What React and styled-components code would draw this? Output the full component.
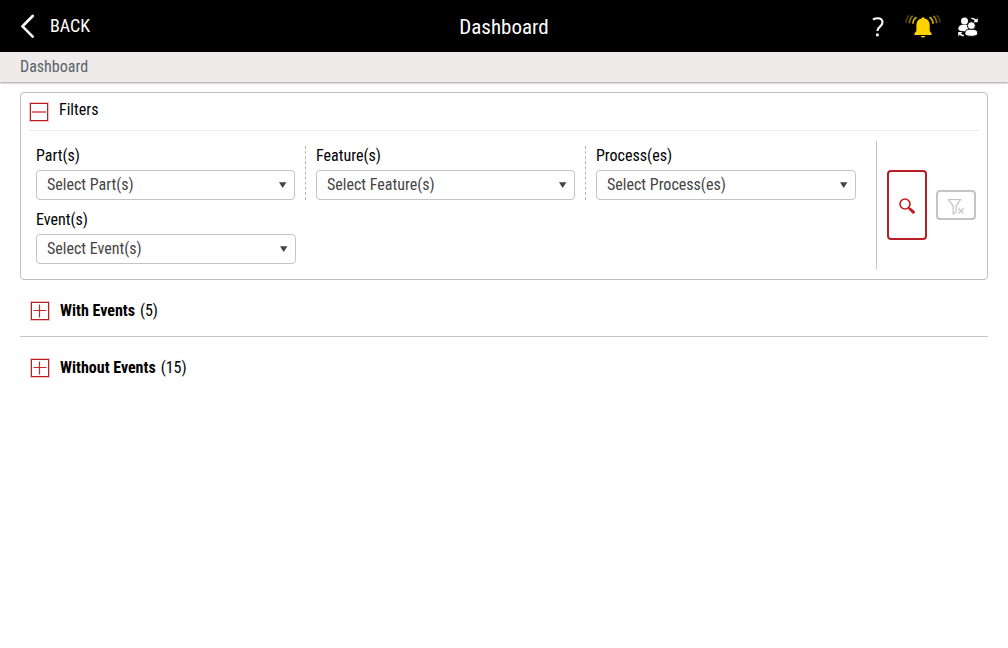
import React, { useState } from "react";
import styled, { createGlobalStyle } from "styled-components";

const filters = [
  { id: "parts", label: "Part(s)", placeholder: "Select Part(s)" },
  { id: "features", label: "Feature(s)", placeholder: "Select Feature(s)" },
  { id: "processes", label: "Process(es)", placeholder: "Select Process(es)" },
  { id: "events", label: "Event(s)", placeholder: "Select Event(s)" },
];

const groups = [
  { id: "with", title: "With Events", count: 5 },
  { id: "without", title: "Without Events", count: 15 },
];

function BackIcon() {
  return (
    <svg width="14" height="24" viewBox="0 0 14 24" fill="none" stroke="#fff" strokeWidth="2.600" strokeLinecap="round" aria-hidden="true">
      <path d="M12.700 2L2.500 12.300l10.200 10.300" />
    </svg>
  );
}

function HelpIcon() {
  return (
    <svg width="20" height="20" viewBox="-4 0 20 20" fill="none" stroke="#fff" strokeWidth="2.100" aria-hidden="true">
      <path d="M1 2.500C2.800 1.400 4.200 1.200 5.800 1.200c2.900 0 4.700 1.500 4.700 4 0 2-1 3.200-2.500 4.400C6.300 10.900 5.400 11.800 5.400 14" />
      <rect x="4.100" y="16.500" width="2.600" height="2.800" fill="#fff" stroke="none" />
    </svg>
  );
}

function BellIcon() {
  return (
    <svg width="36" height="24" viewBox="0 0 36 24" fill="none" strokeWidth="1.700" aria-hidden="true">
      <path fill="#ffd200" d="M16.500 3.500a1.600 1.600 0 0 1 3.100 0c3.300.7 5.100 3.200 5.100 6.500v6l1.800 2.200V20h-17v-1.800L11.400 16v-6c0-3.300 1.800-5.800 5.100-6.500z" />
      <path fill="#ffd200" d="M15.800 21h4.500a2.300 2 0 0 1-4.500 0z" />
      <path stroke="#dcb400" d="M11.500 2.200C9.200 3.500 8 5.500 7.900 8.800M24.500 2.200c2.300 1.300 3.500 3.300 3.600 6.600" />
      <path stroke="#8d7400" d="M7.800.8C5.500 2.600 4.400 5 4.400 8.300M28.200.8c2.300 1.800 3.400 4.200 3.400 7.500" />
      <path stroke="#4a3d00" d="M4.300.3C2 2.200 1 4.700 1 7.800M31.700.3C34 2.200 35 4.700 35 7.800" />
    </svg>
  );
}

function UsersIcon() {
  return (
    <svg width="20" height="20" viewBox="0 0 20 20" fill="#fff" aria-hidden="true">
      <circle cx="6.500" cy="3.900" r="3.500" />
      <path d="M.3 11.700C.3 9 2.500 7.700 4.800 7.700h3.400c1.500 0 3 .8 3.400 2v4.500H5.500C2.300 14.200.3 13.400.3 11.700z" />
      <g stroke="#000" strokeWidth="1">
        <circle cx="13.400" cy="8.700" r="4" />
        <path d="M6.800 16.200c0-2.700 2-3.900 4.500-3.900h3.900c2.500 0 4.500 1.200 4.500 3.900 0 2.100-2.600 3.100-6.400 3.100s-6.500-1-6.500-3.100z" />
      </g>
      <path d="M19.700 1v4.300h-4.500l1.500-1.400c-.8-1.100-1.900-1.700-3.400-1.800V.700c2 0 3.500.5 4.900 1.700z" />
      <path d="M.2 19.200v-4.300h4.300l-1.400 1.300c.6 1 1.500 1.500 2.800 1.600v1.500c-1.700 0-3-.4-4.200-1.500z" />
    </svg>
  );
}

function ToggleIcon({ open }) {
  return (
    <svg width="20" height="20" viewBox="0 0 20 20" fill="none" aria-hidden="true">
      <rect x="0.500" y="0.500" width="19" height="19" stroke="#f3bfc1" />
      <rect x="1.500" y="1.500" width="17" height="17" stroke="#b81f24" />
      {open ? (
        <path d="M3 10h14" stroke="#db7377" strokeWidth="2" />
      ) : (
        <path d="M3.500 9.500h13M9.500 3.500v13" stroke="#c02a2f" strokeWidth="1.200" />
      )}
    </svg>
  );
}

function SearchIcon() {
  return (
    <svg width="16" height="18" viewBox="0 0 16 18" fill="none" stroke="#c01c22" aria-hidden="true">
      <circle cx="6" cy="8" r="5" strokeWidth="1.600" />
      <path d="M9.500 11.500l2 2" strokeWidth="1.600" />
      <path d="M11 13l3.300 3.200" strokeWidth="3" strokeLinecap="round" />
    </svg>
  );
}

function ClearFilterIcon() {
  return (
    <svg width="18" height="20" viewBox="0 0 18 20" fill="none" stroke="#c4c4c4" aria-hidden="true">
      <path strokeWidth="1.200" d="M1.500 4.500h12L9.200 10.800V17L6.200 19V10.800z" />
      <path strokeWidth="1.200" d="M11.500 13.500l5 5M16.500 13.500l-5 5" />
    </svg>
  );
}

export default function App() {
  const [filtersOpen, setFiltersOpen] = useState(true);
  const [openGroups, setOpenGroups] = useState({});

  const toggleGroup = (id) => {
    setOpenGroups({ ...openGroups, [id]: !openGroups[id] });
  };

  return (
    <>
      <GlobalStyle />
      <Header>
        <BackButton type="button">
          <BackIcon />
          BACK
        </BackButton>
        <Title>Dashboard</Title>
        <HeaderActions>
          <IconButton type="button" aria-label="Help"><HelpIcon /></IconButton>
          <IconButton type="button" aria-label="Notifications"><BellIcon /></IconButton>
          <IconButton type="button" aria-label="Switch user"><UsersIcon /></IconButton>
        </HeaderActions>
      </Header>
      <Breadcrumb aria-label="Breadcrumb">
        <a href="#dashboard">Dashboard</a>
      </Breadcrumb>
      <Main>
        <FilterPanel>
          <FilterHeader>
            <IconButton
              type="button"
              aria-label="Toggle filters"
              aria-expanded={filtersOpen}
              onClick={() => setFiltersOpen(!filtersOpen)}
            >
              <ToggleIcon open={filtersOpen} />
            </IconButton>
            <h2>Filters</h2>
          </FilterHeader>
          {filtersOpen && (
            <FilterBody>
              <Fields>
                {filters.map((filter, index) => (
                  <Field key={filter.id} $divided={index < 2}>
                    <label htmlFor={filter.id}>{filter.label}</label>
                    <SelectBox>
                      <select id={filter.id}>
                        <option>{filter.placeholder}</option>
                      </select>
                      <svg width="8" height="6" viewBox="0 0 8 6" fill="#444" aria-hidden="true">
                        <path d="M0 0.200h7.400L3.700 6z" />
                      </svg>
                    </SelectBox>
                  </Field>
                ))}
              </Fields>
              <FilterActions>
                <ActionButton type="button" aria-label="Search" $primary>
                  <SearchIcon />
                </ActionButton>
                <ActionButton type="button" aria-label="Clear filters" disabled>
                  <ClearFilterIcon />
                </ActionButton>
              </FilterActions>
            </FilterBody>
          )}
        </FilterPanel>
        {groups.map((group) => (
          <Group key={group.id}>
            <IconButton
              type="button"
              aria-label={`Toggle ${group.title}`}
              aria-expanded={!!openGroups[group.id]}
              onClick={() => toggleGroup(group.id)}
            >
              <ToggleIcon open={openGroups[group.id]} />
            </IconButton>
            <h2>{group.title}</h2>
            <span>({group.count})</span>
          </Group>
        ))}
      </Main>
    </>
  );
}

const GlobalStyle = createGlobalStyle`
* {
  box-sizing: border-box;
}
body {
  margin: 0;
  background: #fff;
  color: #000;
}
body, button, select {
  font-family: "Roboto Condensed", "Liberation Sans Narrow", Roboto, sans-serif;
  font-size: 16px;
  line-height: 20px;
}
h1, h2 {
  margin: 0;
}
svg {
  display: block;
  flex: none;
}
`;

const Header = styled.header`
  display: grid;
  grid-template-columns: 1fr auto 1fr;
  align-items: center;
  height: 52px;
  padding: 0 20px;
  background: #000;
  color: #fff;
`;

const IconButton = styled.button`
  display: flex;
  padding: 0;
  border: 0;
  background: none;
  cursor: pointer;
`;

const BackButton = styled(IconButton)`
  align-items: center;
  justify-self: start;
  gap: 16px;
  color: #fff;
  font-size: 18px;
`;

const Title = styled.h1`
  font-size: 21px;
  line-height: 24px;
  font-weight: 400;
  padding-top: 2px;
`;

const HeaderActions = styled.div`
  display: flex;
  align-items: center;
  justify-self: end;
  gap: 17px;
  padding: 2px 10px 0 0;
`;

const Breadcrumb = styled.nav`
  padding: 5px 20px;
  background: #efebea;
  box-shadow: 0 1px 2px rgba(0, 0, 0, 0.4);
  a {
    color: #5a6469;
    text-decoration: none;
  }
`;

const Main = styled.main`
  padding: 10px 20px;
`;

const FilterPanel = styled.section`
  padding: 0 8px;
  border: 1px solid #bfbfbf;
  border-radius: 4px;
`;

const FilterHeader = styled.div`
  display: flex;
  align-items: center;
  gap: 10px;
  height: 38px;
  border-bottom: 1px solid #ebebeb;
  h2 {
    padding-bottom: 3px;
    font-size: 16px;
    font-weight: 400;
  }
`;

const FilterBody = styled.div`
  display: flex;
  padding: 10px 0;
`;

const Fields = styled.div`
  flex: 1;
  display: grid;
  grid-template-columns: repeat(3, 1fr);
  row-gap: 10px;
  padding: 5px 0 5px 7px;
`;

const Field = styled.div`
  display: flex;
  flex-direction: column;
  gap: 4px;
  padding-right: 10px;
  margin-right: 10px;
  border-right: ${({ $divided }) => ($divided ? "1px dashed #b5b5b5" : "0")};
`;

const SelectBox = styled.div`
  position: relative;
  select {
    display: block;
    appearance: none;
    width: 100%;
    height: 30px;
    padding: 0 24px 0 10px;
    border: 1px solid #c4c4c4;
    border-radius: 4px;
    background: #fff;
    color: #444;
  }
  svg {
    position: absolute;
    top: 12px;
    right: 8px;
    pointer-events: none;
  }
`;

const FilterActions = styled.div`
  display: flex;
  align-items: center;
  gap: 9px;
  padding: 0 3px 0 10px;
  border-left: 1px solid #c4c4c4;
`;

const ActionButton = styled.button`
  display: flex;
  align-items: center;
  justify-content: center;
  width: 40px;
  height: ${({ $primary }) => ($primary ? "70px" : "30px")};
  padding: 0;
  border: 2px solid ${({ $primary }) => ($primary ? "#b81f24" : "#c4c4c4")};
  border-radius: 4px;
  background: #fff;
`;

const Group = styled.section`
  display: flex;
  align-items: center;
  padding: 21px 10px 15px;
  h2 {
    margin: 0 5px 0 10px;
    font-size: 16px;
    font-weight: 700;
  }
  & + & {
    border-top: 1px solid #c4c4c4;
  }
`;
